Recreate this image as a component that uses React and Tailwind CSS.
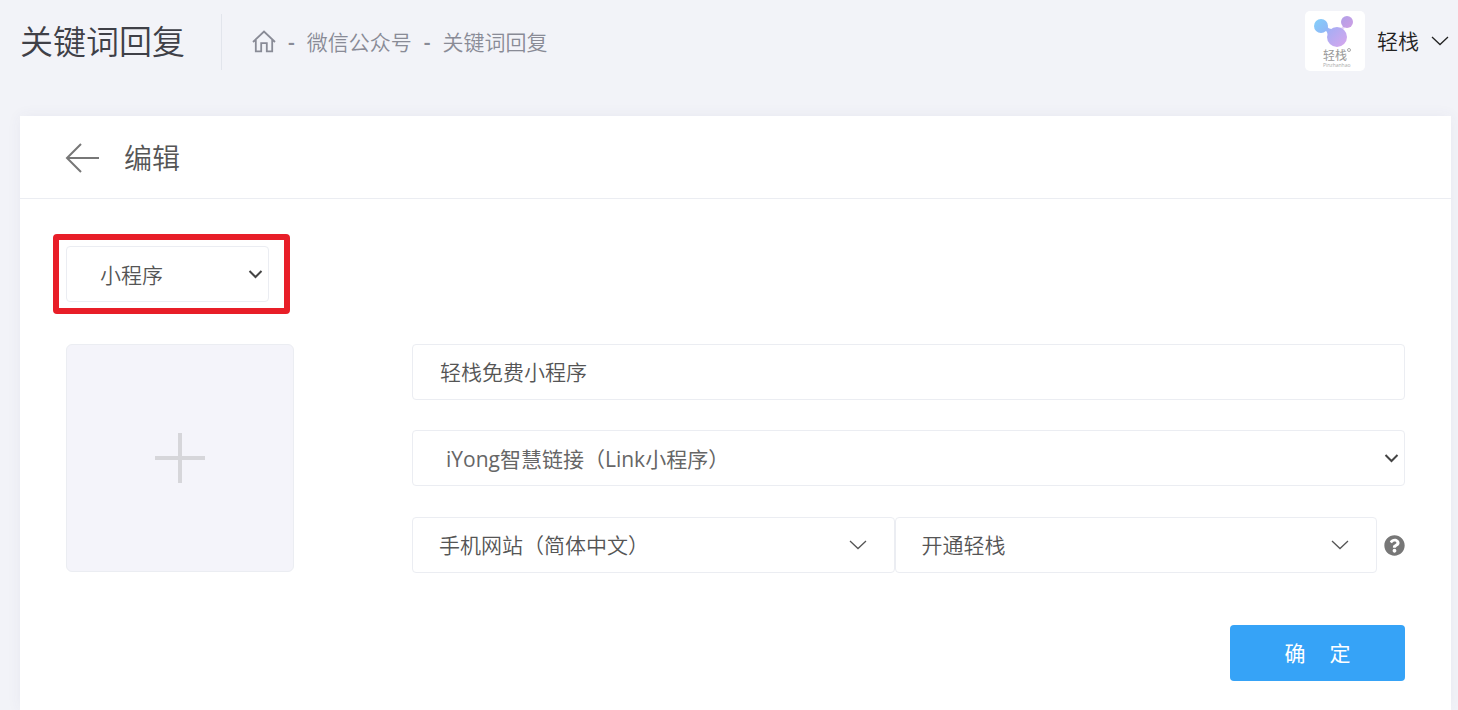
import { useState } from "react";
import { FaQuestionCircle } from "react-icons/fa";

export default function App() {
  const [title, setTitle] = useState("轻栈免费小程序");

  return (
    <div className="min-h-screen flex flex-col bg-[#f2f3f8] font-['Open_Sans','Noto_Sans_CJK_SC',sans-serif] font-[350] text-[21px] leading-7 text-[#555]">
      <Header />

      <main className="flex-1 flex flex-col ml-5 mr-[7px] mt-8 bg-white shadow-[0_0_14px_rgba(69,65,120,0.06)]">
        {/* ================= CARD HEADER ================= */}
        <div className="h-[83px] flex items-center gap-6 pl-[45px] pt-[2px] border-b border-[#ebedf2]">
          <button aria-label="返回">
            <ArrowLeftIcon />
          </button>
          <h2 className="text-[28px] leading-9">编辑</h2>
        </div>

        {/* ================= FORM ================= */}
        <form className="pt-[35px] pb-7" onSubmit={(e) => e.preventDefault()}>
          <div className="w-[237px] ml-[33px] py-[6px] pl-[7px] pr-[15px] border-6 border-[#e81e28] rounded">
            <Select label="回复类型" options={["小程序", "文字", "图片"]} />
          </div>

          <div className="flex mt-[30px] ml-[46px] mr-[46px] gap-[118px]">
            <button
              type="button"
              aria-label="上传封面"
              className="size-[228px] shrink-0 flex items-center justify-center rounded-md border border-[#ebedf2] bg-[#f4f4fa]"
            >
              <PlusIcon />
            </button>

            <div className="flex-1 flex flex-col">
              <input
                aria-label="标题"
                value={title}
                onChange={(e) => setTitle(e.target.value)}
                className="h-14 w-full rounded border border-[#ebedf2] px-[27px] pb-[2px] outline-none"
              />

              <div className="mt-[30px] font-normal text-[#666]">
                <Select label="小程序" options={["iYong智慧链接（Link小程序）"]} />
              </div>

              <div className="flex items-center gap-[7px] mt-[31px]">
                <div className="flex-1 flex">
                  <Select label="网站" options={["手机网站（简体中文）"]} thin />
                  <Select label="页面" options={["开通轻栈"]} thin />
                </div>
                <button type="button" aria-label="帮助">
                  <FaQuestionCircle size={21} className="text-[#777]" />
                </button>
              </div>

              <button className="self-end w-[175px] h-14 mt-[52px] flex items-center justify-center gap-6 rounded bg-[#36a3f7] text-white font-normal">
                <span>确</span>
                <span>定</span>
              </button>
            </div>
          </div>
        </form>
      </main>
    </div>
  );
}

/* ================= HEADER ================= */

function Header() {
  return (
    <header className="h-21 flex items-center pl-5 pr-[9px]">
      <h1 className="text-[33px] leading-10 text-[#3f4047]">关键词回复</h1>

      <nav className="flex items-center h-14 ml-9 pl-[30px] gap-3 border-l border-[#e2e5ec] text-[#898b96]">
        <a href="#" aria-label="首页">
          <HomeIcon />
        </a>
        <span className="font-semibold">-</span>
        <a href="#">微信公众号</a>
        <span className="font-semibold">-</span>
        <a href="#">关键词回复</a>
      </nav>

      <button className="ml-auto flex items-center gap-3 pb-[2px] text-[#222]">
        <Logo />
        <span>轻栈</span>
        <ThinChevron />
      </button>
    </header>
  );
}

/* ================= UI ================= */

function Select({ label, options, thin }) {
  return (
    <div className="relative flex-1">
      <select
        aria-label={label}
        className={`h-14 w-full appearance-none rounded border border-[#ebedf2] bg-white outline-none ${
          thin ? "pl-[26px] pr-12" : "pl-[33px] pr-7 pt-[2px]"
        }`}
      >
        {options.map((o) => (
          <option key={o}>{o}</option>
        ))}
      </select>
      <span
        className={`pointer-events-none absolute inset-y-0 flex items-center ${
          thin ? "right-7" : "right-[6px]"
        }`}
      >
        {thin ? <ThinChevron /> : <BoldChevron />}
      </span>
    </div>
  );
}

function ThinChevron() {
  return (
    <svg width="18" height="10" viewBox="0 0 18 10" fill="none" stroke="currentColor" strokeWidth="1.3">
      <path d="M1 1l8 7.5L17 1" />
    </svg>
  );
}

function BoldChevron() {
  return (
    <svg width="15" height="9" viewBox="0 0 15 9" fill="none" stroke="#444" strokeWidth="2">
      <path d="M1.5 1l6 6 6-6" />
    </svg>
  );
}

function ArrowLeftIcon() {
  return (
    <svg width="35" height="30" viewBox="0 0 35 30" fill="none" stroke="#777" strokeWidth="2">
      <path d="M16 1L2 15l14 14M2 15h32" />
    </svg>
  );
}

function PlusIcon() {
  return (
    <svg width="50" height="50" viewBox="0 0 50 50" stroke="#d6d6da" strokeWidth="4">
      <path d="M25 0v50M0 25h50" />
    </svg>
  );
}

function HomeIcon() {
  return (
    <svg width="24" height="24" viewBox="0 0 24 24" fill="none" stroke="currentColor" strokeWidth="1.8">
      <path d="M1 12L12 1.6l11 10.4M3.8 10v11.4h5.4v-8.2h5.6v8.2h5.4V10" />
    </svg>
  );
}

function Logo() {
  return (
    <svg width="60" height="60" viewBox="0 0 60 60">
      <defs>
        <linearGradient id="logo-a" x1="0" y1="0" x2="1" y2="1">
          <stop offset="0" stopColor="#82d0fa" />
          <stop offset="1" stopColor="#93b4f6" />
        </linearGradient>
        <linearGradient id="logo-b" x1="0" y1="0" x2="1" y2="1">
          <stop offset="0" stopColor="#a0aef5" />
          <stop offset="1" stopColor="#d9a6ec" />
        </linearGradient>
        <linearGradient id="logo-c" x1="0" y1="0" x2="1" y2="1">
          <stop offset="0" stopColor="#b0a0e8" />
          <stop offset="1" stopColor="#cf9fe4" />
        </linearGradient>
      </defs>
      <rect width="60" height="60" rx="5" fill="#fff" />
      <path d="M20 19q2 1 3 5l4-6q-4 0-5-3z" fill="#9bb4f7" />
      <path d="M36 17q2-1 2-3l2 3q-2 0-2 3z" fill="#cba9ee" opacity="0.5" />
      <circle cx="16" cy="15" r="7" fill="url(#logo-a)" />
      <circle cx="32" cy="26" r="10" fill="url(#logo-b)" />
      <circle cx="42" cy="11" r="6" fill="url(#logo-c)" />
      <text x="18" y="49" fontSize="12" fontWeight="400" fill="#999">轻栈</text>
      <circle cx="44" cy="39" r="1.5" fill="none" stroke="#aaa" />
      <text x="18" y="56" fontSize="5" fontWeight="400" fill="#aaa">Pinzhanhao</text>
    </svg>
  );
}
